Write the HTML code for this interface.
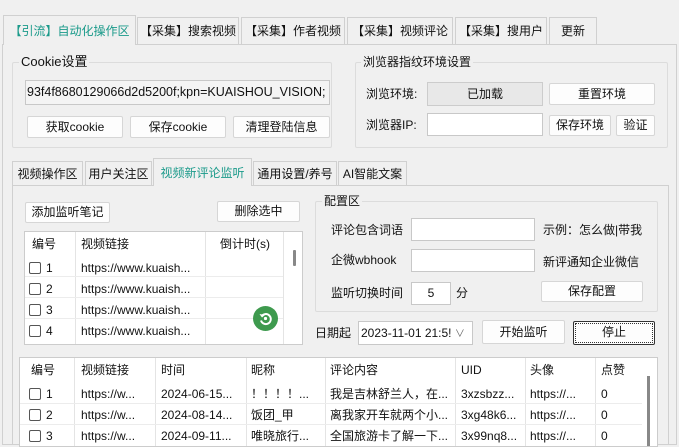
<!DOCTYPE html><html><head><meta charset="utf-8"><style>
*{box-sizing:border-box;margin:0;padding:0}
body{width:679px;height:445px;overflow:hidden;background:#f0f0f0;font:12px "Liberation Sans","Noto Sans CJK SC",sans-serif;color:#111;position:relative}
.a{position:absolute}
.t{position:absolute;white-space:nowrap;line-height:14px}
.tab{position:absolute;border:1px solid #d0d0d0;border-bottom:none;background:#f0f0f0;text-align:center;line-height:26px;white-space:nowrap}
.btn{position:absolute;background:#fdfdfd;border:1px solid #d6d6d6;border-radius:2px;text-align:center;white-space:nowrap}
.grp{position:absolute;border:1px solid #dcdcdc;border-radius:2px}
.in{position:absolute;background:#fff;border:1px solid #c8c8c8}
.cb{display:inline-block;width:12px;height:12px;border:1px solid #555;border-radius:2px;vertical-align:-2px;margin-right:5px;background:#fff}
.vl{position:absolute;width:1px;background:#e4e4e4}
.hl{position:absolute;height:1px;background:#ececec}
</style></head><body>
<div class="a" style="left:2px;top:44px;width:675px;height:401px;border:1px solid #d0d0d0;background:#f0f0f0"></div>
<div class="tab" style="left:3px;top:15px;width:133px;height:30px;background:#f0f0f0;color:#1a9a8a;line-height:30px">【引流】自动化操作区</div>
<div class="tab" style="left:137px;top:17px;width:102px;height:27px">【采集】搜索视频</div>
<div class="tab" style="left:241px;top:17px;width:104px;height:27px">【采集】作者视频</div>
<div class="tab" style="left:347px;top:17px;width:106px;height:27px">【采集】视频评论</div>
<div class="tab" style="left:455px;top:17px;width:92px;height:27px">【采集】搜用户</div>
<div class="tab" style="left:549px;top:17px;width:48px;height:27px">更新</div>

<div class="grp" style="left:12px;top:62px;width:320px;height:86px"></div>
<div class="t" style="left:19px;top:55px;background:#f0f0f0;padding:0 2px;font-size:13px">Cookie设置</div>
<div class="in" style="left:25px;top:80px;width:305px;height:25px;background:#f4f4f4;line-height:23px;overflow:hidden;padding-left:1px;font-size:12.5px">93f4f8680129066d2d5200f;kpn=KUAISHOU_VISION;</div>
<div class="btn" style="left:27px;top:116px;width:96px;height:22px;line-height:20px">获取cookie</div>
<div class="btn" style="left:130px;top:116px;width:96px;height:22px;line-height:20px">保存cookie</div>
<div class="btn" style="left:233px;top:116px;width:97px;height:22px;line-height:20px">清理登陆信息</div>

<div class="grp" style="left:355px;top:62px;width:313px;height:86px"></div>
<div class="t" style="left:361px;top:55px;background:#f0f0f0;padding:0 2px">浏览器指纹环境设置</div>
<div class="t" style="left:366px;top:87px">浏览环境:</div>
<div class="a" style="left:427px;top:82px;width:116px;height:24px;background:#e8e8e8;border:1px solid #ccc;text-align:center;line-height:22px">已加载</div>
<div class="btn" style="left:549px;top:83px;width:106px;height:22px;line-height:20px">重置环境</div>
<div class="t" style="left:366px;top:118px">浏览器IP:</div>
<div class="in" style="left:427px;top:113px;width:116px;height:23px"></div>
<div class="btn" style="left:549px;top:115px;width:62px;height:21px;line-height:19px">保存环境</div>
<div class="btn" style="left:616px;top:115px;width:39px;height:21px;line-height:19px">验证</div>

<div class="a" style="left:12px;top:185px;width:657px;height:260px;border:1px solid #d0d0d0"></div>
<div class="tab" style="left:12px;top:161px;width:71px;height:24px;line-height:24px">视频操作区</div>
<div class="tab" style="left:85px;top:161px;width:67px;height:24px;line-height:24px">用户关注区</div>
<div class="tab" style="left:153px;top:158px;width:99px;height:28px;line-height:28px;color:#1a9a8a">视频新评论监听</div>
<div class="tab" style="left:253px;top:161px;width:84px;height:24px;line-height:24px">通用设置/养号</div>
<div class="tab" style="left:338px;top:161px;width:69px;height:24px;line-height:24px">AI智能文案</div>

<div class="btn" style="left:25px;top:202px;width:85px;height:21px;line-height:19px">添加监听笔记</div>
<div class="btn" style="left:217px;top:201px;width:83px;height:21px;line-height:19px">删除选中</div>
<div class="a" style="left:24px;top:231px;width:279px;height:114px;background:#fff;border:1px solid #ccc;overflow:hidden">
<div class="vl" style="left:50px;top:0;height:114px"></div><div class="vl" style="left:180px;top:0;height:114px"></div><div class="vl" style="left:258px;top:0;height:114px"></div>
<div class="t" style="left:7px;top:5px">编号</div><div class="t" style="left:56px;top:5px">视频链接</div><div class="t" style="left:195px;top:5px">倒计时(s)</div>
<div class="hl" style="left:0;top:44px;width:258px"></div><div class="hl" style="left:0;top:65px;width:258px"></div><div class="hl" style="left:0;top:86px;width:258px"></div>
<div class="t" style="left:4px;top:29px"><span class="cb"></span>1</div><div class="t" style="left:56px;top:29px">https://www.kuaish...</div>
<div class="t" style="left:4px;top:50px"><span class="cb"></span>2</div><div class="t" style="left:56px;top:50px">https://www.kuaish...</div>
<div class="t" style="left:4px;top:71px"><span class="cb"></span>3</div><div class="t" style="left:56px;top:71px">https://www.kuaish...</div>
<div class="t" style="left:4px;top:92px"><span class="cb"></span>4</div><div class="t" style="left:56px;top:92px">https://www.kuaish...</div>
<div class="a" style="left:268px;top:18px;width:3px;height:16px;background:#888;border-radius:1px"></div>
</div>
<div class="a" style="left:253px;top:306px;width:25px;height:25px;border-radius:50%;background:#3e9a4e"></div>
<svg class="a" style="left:257px;top:310px" width="17" height="17" viewBox="0 0 17 17"><path d="M4.5 6.5A5 5 0 1 1 4 10.5" fill="none" stroke="#fff" stroke-width="2"/><path d="M2.5 4l2.5 3.5 3-2.5z" fill="#fff"/><circle cx="8.5" cy="8.5" r="1.6" fill="#fff"/></svg>

<div class="grp" style="left:315px;top:201px;width:343px;height:111px"></div>
<div class="t" style="left:322px;top:194px;background:#f0f0f0;padding:0 2px">配置区</div>
<div class="t" style="left:331px;top:223px">评论包含词语</div>
<div class="in" style="left:411px;top:218px;width:124px;height:23px"></div>
<div class="t" style="left:543px;top:223px">示例：怎么做|带我</div>
<div class="t" style="left:331px;top:253px">企微wbhook</div>
<div class="in" style="left:411px;top:249px;width:124px;height:23px"></div>
<div class="t" style="left:543px;top:255px">新评通知企业微信</div>
<div class="t" style="left:331px;top:286px">监听切换时间</div>
<div class="in" style="left:411px;top:282px;width:40px;height:23px;text-align:center;line-height:21px">5</div>
<div class="t" style="left:456px;top:286px">分</div>
<div class="btn" style="left:541px;top:281px;width:102px;height:21px;line-height:19px">保存配置</div>

<div class="t" style="left:315px;top:326px">日期起</div>
<div class="in" style="left:358px;top:321px;width:115px;height:24px;line-height:22px;padding-left:2px;overflow:hidden">2023-11-01 21:5! <span style="color:#666;font-size:10px">∨</span></div>
<div class="btn" style="left:482px;top:320px;width:83px;height:24px;line-height:22px">开始监听</div>
<div class="btn" style="left:573px;top:321px;width:82px;height:24px;line-height:20px;border:1px solid #333;outline:1px dotted #333;outline-offset:-3px">停止</div>

<div class="a" style="left:19px;top:357px;width:639px;height:90px;background:#fff;border:1px solid #ccc;overflow:hidden">
<div class="vl" style="left:54px;top:0;height:90px"></div><div class="vl" style="left:135px;top:0;height:90px"></div><div class="vl" style="left:226px;top:0;height:90px"></div><div class="vl" style="left:305px;top:0;height:90px"></div><div class="vl" style="left:435px;top:0;height:90px"></div><div class="vl" style="left:505px;top:0;height:90px"></div><div class="vl" style="left:575px;top:0;height:90px"></div>
<div class="a" style="left:627px;top:18px;width:3px;height:72px;background:#888"></div>
<div class="hl" style="left:0;top:45px;width:622px"></div><div class="hl" style="left:0;top:66px;width:622px"></div>
<div class="t" style="left:11px;top:5px">编号</div><div class="t" style="left:61px;top:5px">视频链接</div><div class="t" style="left:141px;top:5px">时间</div><div class="t" style="left:231px;top:5px">昵称</div><div class="t" style="left:310px;top:5px">评论内容</div><div class="t" style="left:441px;top:5px">UID</div><div class="t" style="left:510px;top:5px">头像</div><div class="t" style="left:581px;top:5px">点赞</div>
<div class="t" style="left:9px;top:29px"><span class="cb"></span>1</div><div class="t" style="left:61px;top:29px">https://w...</div><div class="t" style="left:141px;top:29px">2024-06-15...</div><div class="t" style="left:231px;top:29px">！！！！...</div><div class="t" style="left:310px;top:29px">我是吉林舒兰人，在...</div><div class="t" style="left:441px;top:29px">3xzsbzz...</div><div class="t" style="left:510px;top:29px">https://...</div><div class="t" style="left:581px;top:29px">0</div>
<div class="t" style="left:9px;top:50px"><span class="cb"></span>2</div><div class="t" style="left:61px;top:50px">https://w...</div><div class="t" style="left:141px;top:50px">2024-08-14...</div><div class="t" style="left:231px;top:50px">饭团_甲</div><div class="t" style="left:310px;top:50px">离我家开车就两个小...</div><div class="t" style="left:441px;top:50px">3xg48k6...</div><div class="t" style="left:510px;top:50px">https://...</div><div class="t" style="left:581px;top:50px">0</div>
<div class="t" style="left:9px;top:71px"><span class="cb"></span>3</div><div class="t" style="left:61px;top:71px">https://w...</div><div class="t" style="left:141px;top:71px">2024-09-11...</div><div class="t" style="left:231px;top:71px">唯晓旅行...</div><div class="t" style="left:310px;top:71px">全国旅游卡了解一下...</div><div class="t" style="left:441px;top:71px">3x99nq8...</div><div class="t" style="left:510px;top:71px">https://...</div><div class="t" style="left:581px;top:71px">0</div>
</div>
</body></html>
